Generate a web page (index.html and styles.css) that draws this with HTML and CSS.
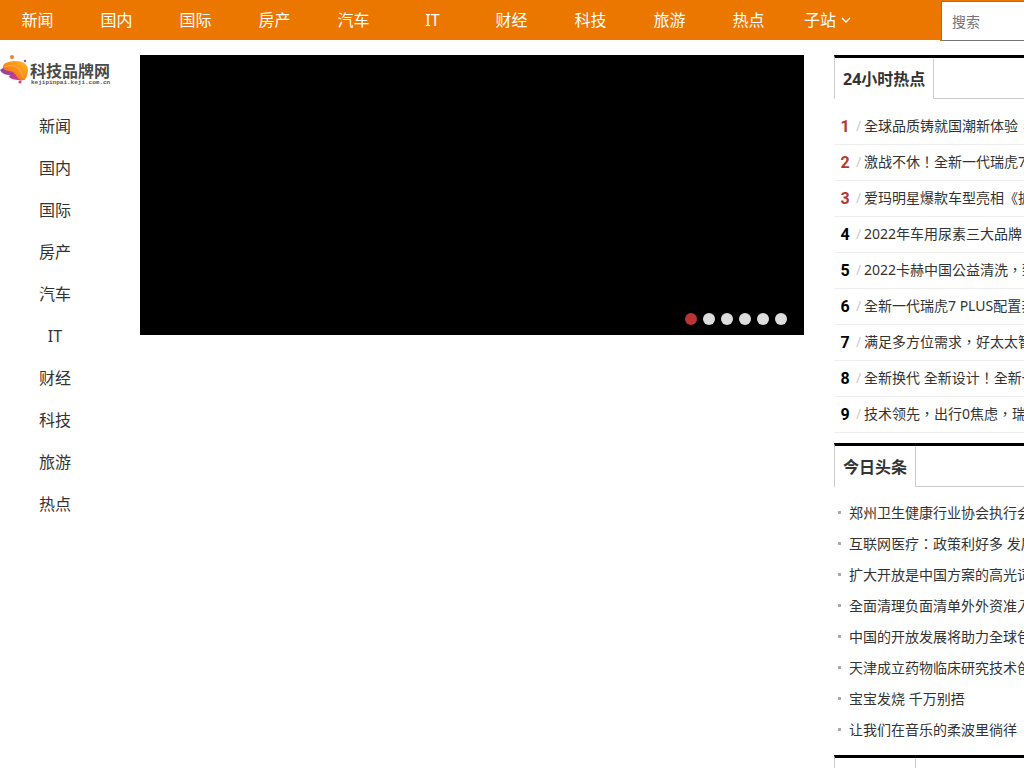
FILE: index.html
```html
<!DOCTYPE html>
<html>
<head>
<meta charset="utf-8">
<title>科技品牌网</title>
<link rel="stylesheet" href="styles.css">
</head>
<body>
<header class="topbar">
  <nav class="topnav">
    <a href="#">新闻</a><a href="#">国内</a><a href="#">国际</a><a href="#">房产</a><a href="#">汽车</a><a href="#">IT</a><a href="#">财经</a><a href="#">科技</a><a href="#">旅游</a><a href="#">热点</a>
    <a href="#">子站<svg class="chevron" viewBox="0 0 10 6" aria-hidden="true"><path d="M1 1l4 4 4-4"/></svg></a>
  </nav>
  <form class="search"><input type="text" placeholder="搜索" aria-label="搜索"></form>
</header>
<div class="page">
  <aside class="side">
    <a class="logo" href="#" aria-label="科技品牌网">
      <svg viewBox="0 0 112 32" role="img" aria-hidden="true">
        <defs>
          <linearGradient id="orb" x1="0" y1="1" x2="1" y2="0"><stop offset="0" stop-color="#f0523c"/><stop offset=".5" stop-color="#fa8b18"/><stop offset="1" stop-color="#ffc020"/></linearGradient>
          <linearGradient id="wing" x1="0" y1="0" x2="1" y2="1"><stop offset="0" stop-color="#7b45ad"/><stop offset="1" stop-color="#e83580"/></linearGradient>
        </defs>
        <path d="M0 15c3-3 8-4 12-1s8 3 13 10c0 1-4 2-7 1-3 0-5-1-8-2-1-1-1-2 0-3-4 0-8-1-10-5z" fill="url(#wing)"/>
        <path d="M3 13C2 8 9 6 16 6c8 0 12 4 12 9 0 5-2 10-6 10-5 0-5-5-8-7-3-3-9-1-11-5z" fill="url(#orb)"/>
        <path d="M4 12c5-2 10-2 14 1s3 7 6 10" fill="none" stroke="#ffb04d" stroke-width="1"/>
        <circle cx="12" cy="2" r="2" fill="#f47a2c"/><circle cx="25" cy="6" r="1.2" fill="#8a4fb5"/><circle cx="20" cy="27" r="1.6" fill="#e8397d"/>
        <text class="logo-name" x="30" y="22">科技品牌网</text>
        <text class="logo-url" x="31" y="29">kejipinpai.keji.com.cn</text>
      </svg>
    </a>
    <nav class="sidenav">
      <a href="#">新闻</a><a href="#">国内</a><a href="#">国际</a><a href="#">房产</a><a href="#">汽车</a><a href="#">IT</a><a href="#">财经</a><a href="#">科技</a><a href="#">旅游</a><a href="#">热点</a>
    </nav>
  </aside>
  <main class="slider">
    <div class="dots">
      <button class="dot active" aria-label="1"></button><button class="dot" aria-label="2"></button><button class="dot" aria-label="3"></button><button class="dot" aria-label="4"></button><button class="dot" aria-label="5"></button><button class="dot" aria-label="6"></button>
    </div>
  </main>
  <div class="rail">
    <section class="panel">
      <div class="head"><h2>24小时热点</h2></div>
      <ol class="rank">
        <li><b>1</b><i>/</i><a href="#">全球品质铸就国潮新体验，</a></li>
        <li><b>2</b><i>/</i><a href="#">激战不休！全新一代瑞虎7</a></li>
        <li><b>3</b><i>/</i><a href="#">爱玛明星爆款车型亮相《披</a></li>
        <li><b>4</b><i>/</i><a href="#">2022年车用尿素三大品牌</a></li>
        <li><b>5</b><i>/</i><a href="#">2022卡赫中国公益清洗，致</a></li>
        <li><b>6</b><i>/</i><a href="#">全新一代瑞虎7 PLUS配置非</a></li>
        <li><b>7</b><i>/</i><a href="#">满足多方位需求，好太太智</a></li>
        <li><b>8</b><i>/</i><a href="#">全新换代 全新设计！全新一</a></li>
        <li><b>9</b><i>/</i><a href="#">技术领先，出行0焦虑，瑞</a></li>
      </ol>
    </section>
    <section class="panel">
      <div class="head"><h2>今日头条</h2></div>
      <ul class="news">
        <li><a href="#">郑州卫生健康行业协会执行会</a></li>
        <li><a href="#">互联网医疗：政策利好多 发展</a></li>
        <li><a href="#">扩大开放是中国方案的高光词</a></li>
        <li><a href="#">全面清理负面清单外外资准入</a></li>
        <li><a href="#">中国的开放发展将助力全球包</a></li>
        <li><a href="#">天津成立药物临床研究技术创</a></li>
        <li><a href="#">宝宝发烧 千万别捂</a></li>
        <li><a href="#">让我们在音乐的柔波里徜徉</a></li>
      </ul>
    </section>
    <section class="panel">
      <div class="head"><h2></h2></div>
    </section>
  </div>
</div>
</body>
</html>
```
FILE: styles.css
```css
* { box-sizing: border-box; }
html { overflow: hidden; }
body { margin: 0; background: #fff; color: #333; font: 16px/24px "Noto Sans", "Noto Sans CJK TC", sans-serif; }
a { color: inherit; text-decoration: none; }
h2, ol, ul { margin: 0; padding: 0; list-style: none; }

.topbar { display: flex; height: 40px; background: #eb7600; color: #fff; }
.topnav { display: flex; flex: 1; margin-left: -2px; }
.topnav a { flex: 0 0 79px; display: flex; align-items: center; justify-content: center; }
.chevron { width: 10px; height: 6px; margin-left: 5px; fill: none; stroke: #fff; stroke-width: 1.4; }
.search { flex: 0 0 84px; min-width: 0; height: 41px; padding: 1px 0 0 1px; background: #eb7600; }
.search input { width: 200px; height: 40px; padding: 0 10px; border: 1px solid #767676; background: #fff; font: 14px "Noto Sans", "Noto Sans CJK TC", sans-serif; }
.search input::placeholder { color: #757575; }

.page { display: grid; grid-template-columns: 110px minmax(0, 1fr) 190px; gap: 30px; padding-top: 15px; align-items: start; }
.logo { display: block; height: 32px; }
.logo svg { display: block; width: 112px; height: 32px; overflow: visible; }
.logo-name { font: bold 16px "Noto Sans CJK SC", sans-serif; fill: #4a4a4a; }
.logo-url { font: bold 6px "Liberation Mono", monospace; fill: #555; }
.sidenav { display: flex; flex-direction: column; padding-top: 18px; text-align: center; }
.sidenav a { line-height: 42px; }

.slider { display: flex; align-items: flex-end; justify-content: flex-end; height: 280px; padding: 0 17px 10px; background: #000; }
.dots { display: flex; gap: 6px; }
.dot { width: 12px; height: 12px; padding: 0; border: 0; border-radius: 50%; background: #ddd; }
.dot.active { background: #b93433; }

.rail { display: flex; flex-direction: column; gap: 10px; overflow: hidden; white-space: nowrap; }
.head { display: flex; height: 44px; border-top: 3px solid #000; border-left: 1px solid #ccc; }
.head::after { content: ""; flex: 1; border-bottom: 1px solid #ccc; }
.head h2 { min-width: 81px; margin-top: 1px; padding: 0 8px; border-right: 1px solid #ccc; font-size: 16px; line-height: 40px; }
.rank { padding-top: 10px; font-size: 14px; }
.rank li { display: flex; height: 36px; line-height: 34px; border-bottom: 1px solid #eee; }
.rank b { flex: none; width: 22px; text-align: center; font: bold 16px/35px Roboto, sans-serif; color: #000; }
.rank li:nth-child(-n+3) b { color: #b93433; }
.rank i { flex: none; width: 8px; color: #ccc; font-style: normal; }
.news { padding-top: 10px; font-size: 14px; }
.news li { display: flex; align-items: center; line-height: 31px; }
.news li::before { content: ""; flex: none; width: 3px; height: 3px; margin: 0 8px 0 4px; background: #aaa; }
```
